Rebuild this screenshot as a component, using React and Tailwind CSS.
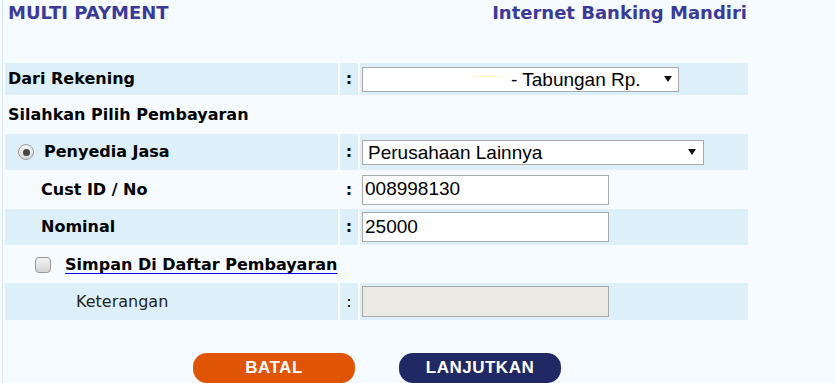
import React from "react";

const verdana = { fontFamily: '"DejaVu Sans", Verdana, sans-serif' };
const arial = { fontFamily: '"Liberation Sans", Arial, sans-serif' };

const Arrow = () => (
  <svg width="8" height="6" viewBox="0 0 8 6" className="shrink-0">
    <path d="M0 0 H8 L4 6 Z" fill="#111" />
  </svg>
);

const Row = ({ blue, h, label, colon = ":", colonBold = true, children }) => (
  <div className={`flex gap-[2px] ${h} ${blue ? "bg-white" : ""}`}>
    <div className={`w-[333px] flex items-center ${blue ? "bg-[#ddf0fa]" : ""}`}>{label}</div>
    <div
      className={`w-[18px] flex items-center justify-center text-[16px] text-black ${
        colonBold ? "font-bold" : "font-normal"
      } ${blue ? "bg-[#ddf0fa]" : ""}`}
    >
      {colon}
    </div>
    <div className={`flex-1 flex items-center pl-[2px] ${blue ? "bg-[#ddf0fa]" : ""}`}>{children}</div>
  </div>
);

export default function App() {
  return (
    <div className="w-[836px] h-[383px] overflow-hidden bg-[#f5fbff]" style={verdana}>
      <div className="ml-[2px] h-full border-l border-[#d6eaf6]">
        <div className="w-[744px] flex justify-between pl-[5px] pt-[2px] text-[18px] leading-[22px] font-bold text-[#3b3a98]">
          <span>MULTI PAYMENT</span>
          <span>Internet Banking Mandiri</span>
        </div>

        <div className="mt-[39px] ml-[2px] w-[743px] flex flex-col gap-[2px] text-[16px] font-bold text-black">
          <Row blue h="h-[32px]" label={<span className="pl-[3px]">Dari Rekening</span>}>
            <div
              className="w-[317px] h-[25px] bg-white border border-[#a9a9a9] flex items-center pr-[6px]"
              style={arial}
            >
              <span className="ml-[108px] w-[35px] h-[1px] bg-[#fff6c8] self-start mt-[8px]" />
              <span className="ml-[5px] flex-1 text-[19px] font-normal leading-none">- Tabungan Rp.</span>
              <Arrow />
            </div>
          </Row>

          <Row h="h-[35px]" colon="" label={<span className="pl-[3px]">Silahkan Pilih Pembayaran</span>} />

          <Row
            blue
            h="h-[36px]"
            label={
              <div className="flex items-center pl-[13px]">
                <span className="w-[16px] h-[16px] rounded-full border border-[#9c9c9c] bg-gradient-to-b from-[#f4f4f4] to-[#d8d8d8] flex items-center justify-center">
                  <span className="w-[7px] h-[7px] rounded-full bg-[#444]" />
                </span>
                <span className="ml-[10px]">Penyedia Jasa</span>
              </div>
            }
          >
            <div
              className="w-[342px] h-[25px] bg-white border border-[#a9a9a9] flex items-center pl-[5px] pr-[7px]"
              style={arial}
            >
              <span className="flex-1 text-[19px] font-normal leading-none">Perusahaan Lainnya</span>
              <Arrow />
            </div>
          </Row>

          <Row h="h-[35px]" label={<span className="pl-[36px]">Cust ID / No</span>}>
            <div
              className="w-[247px] h-[30px] bg-white border border-[#a9a9a9] flex items-center pl-[2px] text-[19px] font-normal"
              style={arial}
            >
              008998130
            </div>
          </Row>

          <Row blue h="h-[36px]" label={<span className="pl-[36px]">Nominal</span>}>
            <div
              className="w-[247px] h-[30px] bg-white border border-[#a9a9a9] flex items-center pl-[2px] text-[19px] font-normal"
              style={arial}
            >
              25000
            </div>
          </Row>

          <div className="h-[34px] flex items-center pl-[30px] pt-[2px]">
            <span className="w-[16px] h-[16px] rounded-[4px] border border-[#9a9a9a] bg-gradient-to-b from-[#f2f2f2] to-[#d4d4d4]" />
            <a href="#" className="ml-[14px] text-black underline decoration-[#0000ee] underline-offset-[3px]">
              Simpan Di Daftar Pembayaran
            </a>
          </div>

          <Row
            blue
            h="h-[37px]"
            colonBold={false}
            label={<span className="pl-[71px] font-normal text-[16px] text-[#222]">Keterangan</span>}
          >
            <div className="w-[247px] h-[31px] bg-[#ebebe4] border border-[#a9a9a9]" />
          </Row>
        </div>

        <div className="mt-[33px] flex gap-[44px] pl-[190px]" style={arial}>
          <button className="w-[162px] h-[30px] rounded-[14px] bg-[#e05406] text-white font-bold text-[17px] tracking-[0.5px]">
            BATAL
          </button>
          <button className="w-[162px] h-[30px] rounded-[14px] bg-[#212964] text-white font-bold text-[17px] tracking-[0.5px]">
            LANJUTKAN
          </button>
        </div>
      </div>
    </div>
  );
}
